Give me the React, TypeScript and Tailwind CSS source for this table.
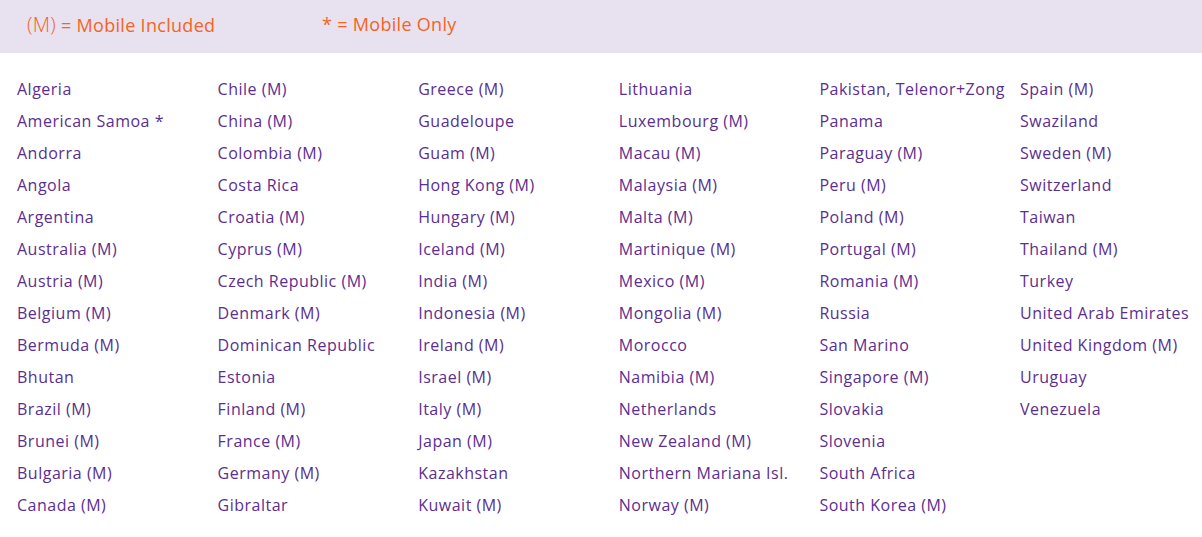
import React from "react";

const cols: string[][] = [
  ["Algeria","American Samoa *","Andorra","Angola","Argentina","Australia (M)","Austria (M)","Belgium (M)","Bermuda (M)","Bhutan","Brazil (M)","Brunei (M)","Bulgaria (M)","Canada (M)"],
  ["Chile (M)","China (M)","Colombia (M)","Costa Rica","Croatia (M)","Cyprus (M)","Czech Republic (M)","Denmark (M)","Dominican Republic","Estonia","Finland (M)","France (M)","Germany (M)","Gibraltar"],
  ["Greece (M)","Guadeloupe","Guam (M)","Hong Kong (M)","Hungary (M)","Iceland (M)","India (M)","Indonesia (M)","Ireland (M)","Israel (M)","Italy (M)","Japan (M)","Kazakhstan","Kuwait (M)"],
  ["Lithuania","Luxembourg (M)","Macau (M)","Malaysia (M)","Malta (M)","Martinique (M)","Mexico (M)","Mongolia (M)","Morocco","Namibia (M)","Netherlands","New Zealand (M)","Northern Mariana Isl.","Norway (M)"],
  ["Pakistan, Telenor+Zong","Panama","Paraguay (M)","Peru (M)","Poland (M)","Portugal (M)","Romania (M)","Russia","San Marino","Singapore (M)","Slovakia","Slovenia","South Africa","South Korea (M)"],
  ["Spain (M)","Swaziland","Sweden (M)","Switzerland","Taiwan","Thailand (M)","Turkey","United Arab Emirates","United Kingdom (M)","Uruguay","Venezuela"],
];

export default function App() {
  return (
    <div className="w-[1202px] h-[537px] bg-white" style={{ fontFamily: '"Open Sans", "DejaVu Sans", sans-serif' }}>
      <div className="h-[53px] bg-[#e8e1ef] flex items-center pb-[4px] text-[18px] text-[#f5641e] tracking-[0.3px]">
        <span className="ml-[27px] w-[295px]"><span className="text-[20px] font-light">(M)</span> = Mobile Included</span>
        <span>* = Mobile Only</span>
      </div>
      <div className="grid grid-cols-[repeat(6,200.6px)] pt-[20px]">
        {cols.map((c, i) => (
          <div key={i} className="pl-[17px] flex flex-col">
            {c.map((n) => (
              <div key={n} className="h-[32px] leading-[32px] text-[16px] tracking-[0.5px] text-[#5b2e91] whitespace-nowrap">{n}</div>
            ))}
          </div>
        ))}
      </div>
    </div>
  );
}
